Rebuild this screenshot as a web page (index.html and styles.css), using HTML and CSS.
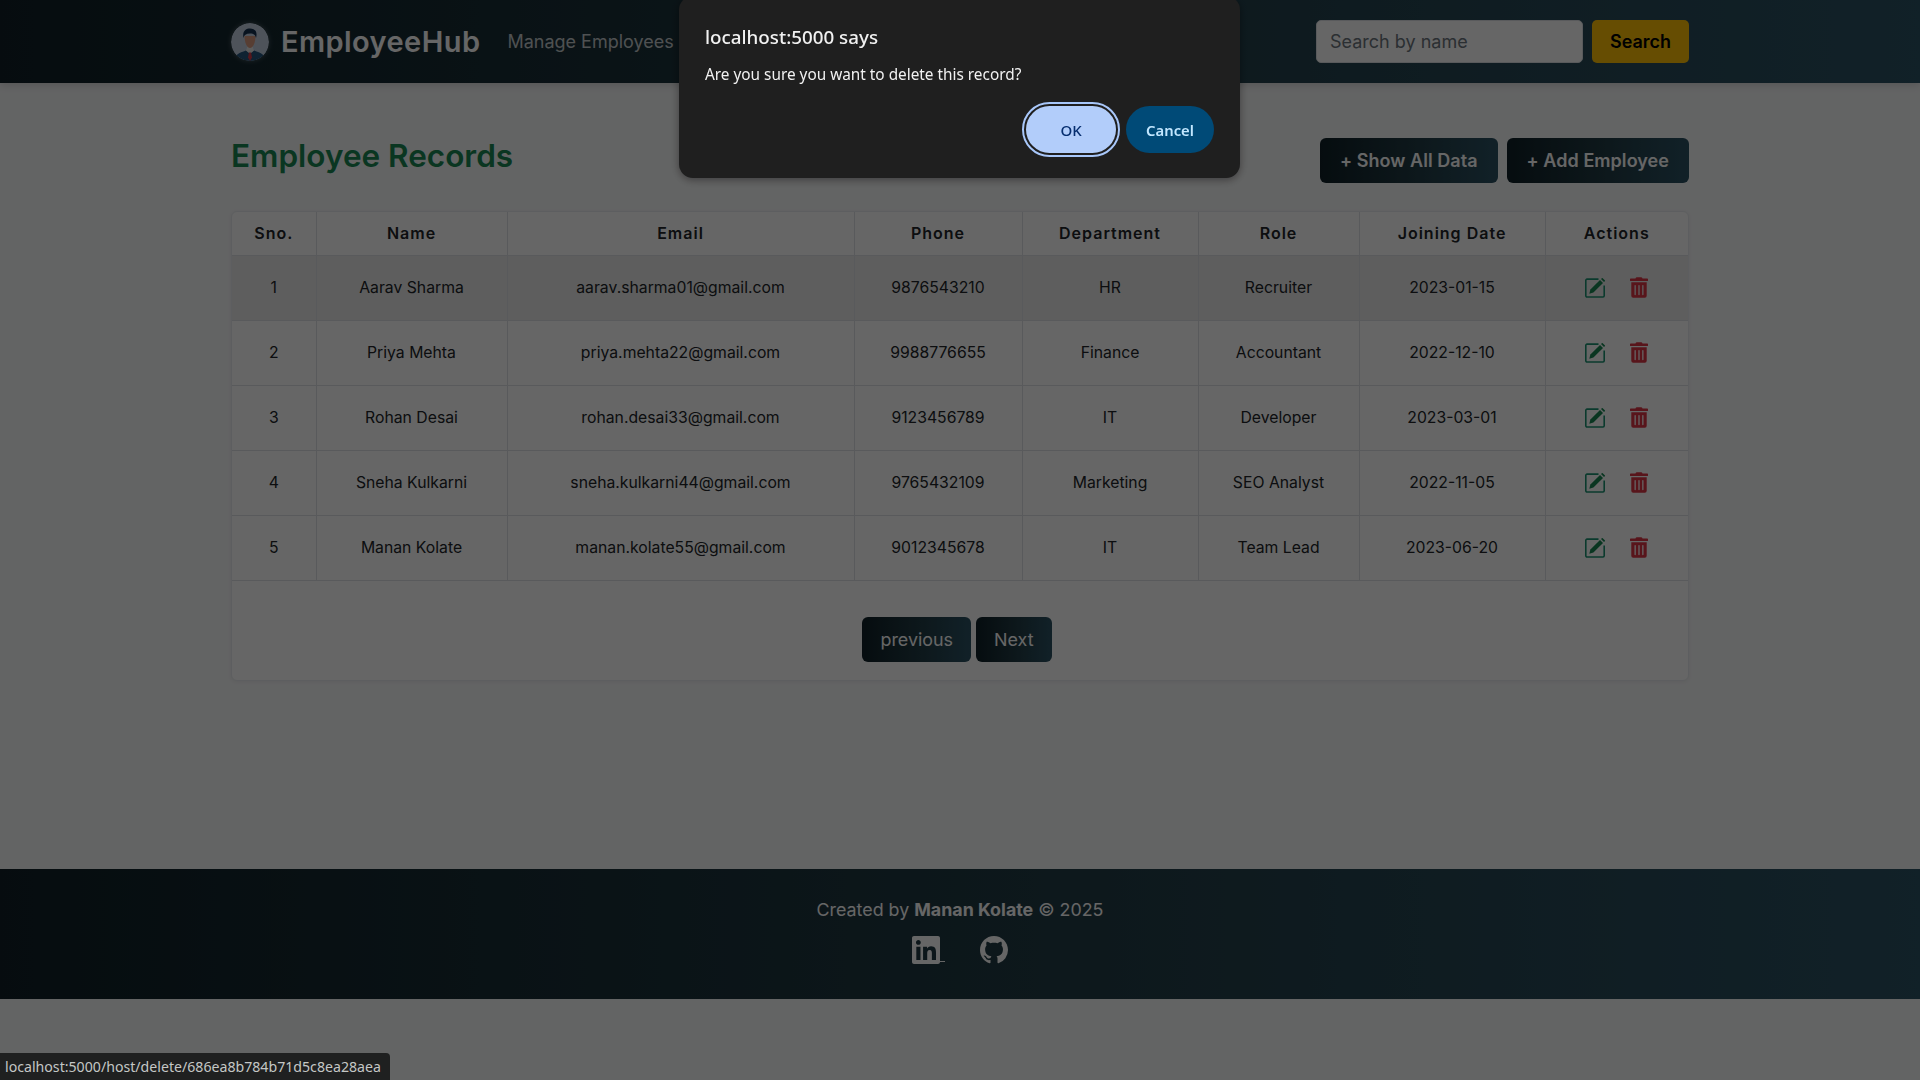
FILE: index.html
```html
<!DOCTYPE html>
<html lang="en">
<head>
<meta charset="utf-8">
<title>EmployeeHub</title>
<link rel="stylesheet" href="styles.css">
</head>
<body>
<svg class="sprite" aria-hidden="true">
  <symbol id="i-edit" viewBox="0 0 20 20">
    <path class="edit-box" d="M13.500 1.100H2A1.200 1.200 0 0 0 .8 2.300V17.800A1.200 1.200 0 0 0 2 19h16a1.200 1.200 0 0 0 1.200-1.200V7.500"/>
    <path class="edit-pen" d="M4.300 15.700l1.100-4.100L15 2l3 3-9.600 9.600z"/>
    <path class="edit-pen" d="M16 1l.8-.8a.6.6 0 0 1 .9 0l2.100 2.100a.6.6 0 0 1 0 .9l-.8.800z"/>
  </symbol>
  <symbol id="i-trash" viewBox="0 0 448 512">
    <path d="M32 464a48 48 0 0 0 48 48h288a48 48 0 0 0 48-48V128H32zm272-256a16 16 0 0 1 32 0v224a16 16 0 0 1-32 0zm-96 0a16 16 0 0 1 32 0v224a16 16 0 0 1-32 0zm-96 0a16 16 0 0 1 32 0v224a16 16 0 0 1-32 0zM432 32H312l-9.400-18.700A24 24 0 0 0 281.100 0H166.800a23.720 23.720 0 0 0-21.400 13.300L136 32H16A16 16 0 0 0 0 48v32a16 16 0 0 0 16 16h416a16 16 0 0 0 16-16V48a16 16 0 0 0-16-16z"/>
  </symbol>
</svg>

<nav class="navbar">
  <div class="nav-inner">
    <div class="nav-left">
      <svg class="avatar" viewBox="0 0 38 38" aria-hidden="true">
        <defs><clipPath id="round"><circle cx="19" cy="19" r="19"/></clipPath></defs>
        <g clip-path="url(#round)">
          <rect width="38" height="38" fill="#c2cfe2"/>
          <path d="M3 38c0-6 5-8 12-10.500l4 2 4-2c7 2.500 12 4.500 12 10.500z" fill="#26557e"/>
          <path d="M15 27.500l4 3.500 4-3.500-1.500-4h-5z" fill="#e8e8e8"/>
          <path d="M13.500 13c0 6.500 2.500 12 5.500 12s5.500-5.500 5.500-12z" fill="#d99c80"/>
          <path d="M18 29.500h2l1 5-2 3.500-2-3.500z" fill="#d83a48"/>
          <path d="M12.500 15c-1.500-7 2.500-9.500 6.500-9.500s8 2 6 9.500c-.5-3-2-4.500-6-4.500s-6 1.500-6.500 4.500z" fill="#15304f"/>
        </g>
      </svg>
      <span class="brand">EmployeeHub</span>
      <a class="nav-link">Manage Employees</a>
    </div>
    <form class="search">
      <input class="search-input" type="text" placeholder="Search by name">
      <button class="search-btn" type="button">Search</button>
    </form>
  </div>
</nav>

<main class="page">
  <div class="head-row">
    <h1 class="title">Employee Records</h1>
    <div class="head-actions">
      <a class="grad-btn strong">+ Show All Data</a>
      <a class="grad-btn strong">+ Add Employee</a>
    </div>
  </div>

  <section class="card">
    <table class="records">
      <colgroup>
        <col class="c-sno"><col class="c-name"><col class="c-email"><col class="c-phone">
        <col class="c-dept"><col class="c-role"><col class="c-date"><col class="c-act">
      </colgroup>
      <thead>
        <tr><th>Sno.</th><th>Name</th><th>Email</th><th>Phone</th><th>Department</th><th>Role</th><th>Joining Date</th><th>Actions</th></tr>
      </thead>
      <tbody>
        <tr class="hovered"><td>1</td><td>Aarav Sharma</td><td>aarav.sharma01@gmail.com</td><td>9876543210</td><td>HR</td><td>Recruiter</td><td>2023-01-15</td>
          <td><div class="acts"><svg class="ic-edit"><use href="#i-edit"/></svg><svg class="ic-trash"><use href="#i-trash"/></svg></div></td></tr>
        <tr><td>2</td><td>Priya Mehta</td><td>priya.mehta22@gmail.com</td><td>9988776655</td><td>Finance</td><td>Accountant</td><td>2022-12-10</td>
          <td><div class="acts"><svg class="ic-edit"><use href="#i-edit"/></svg><svg class="ic-trash"><use href="#i-trash"/></svg></div></td></tr>
        <tr><td>3</td><td>Rohan Desai</td><td>rohan.desai33@gmail.com</td><td>9123456789</td><td>IT</td><td>Developer</td><td>2023-03-01</td>
          <td><div class="acts"><svg class="ic-edit"><use href="#i-edit"/></svg><svg class="ic-trash"><use href="#i-trash"/></svg></div></td></tr>
        <tr><td>4</td><td>Sneha Kulkarni</td><td>sneha.kulkarni44@gmail.com</td><td>9765432109</td><td>Marketing</td><td>SEO Analyst</td><td>2022-11-05</td>
          <td><div class="acts"><svg class="ic-edit"><use href="#i-edit"/></svg><svg class="ic-trash"><use href="#i-trash"/></svg></div></td></tr>
        <tr><td>5</td><td>Manan Kolate</td><td>manan.kolate55@gmail.com</td><td>9012345678</td><td>IT</td><td>Team Lead</td><td>2023-06-20</td>
          <td><div class="acts"><svg class="ic-edit"><use href="#i-edit"/></svg><svg class="ic-trash"><use href="#i-trash"/></svg></div></td></tr>
      </tbody>
    </table>
    <div class="pager">
      <a class="grad-btn">previous</a>
      <a class="grad-btn">Next</a>
    </div>
  </section>
</main>

<footer class="footer">
  <p class="credit">Created by <strong>Manan Kolate</strong> © 2025</p>
  <div class="socials">
    <a class="social linked">
      <svg viewBox="0 32 448 448"><path d="M416 32H31.900C14.300 32 0 46.500 0 64.300v383.400C0 465.500 14.300 480 31.900 480H416c17.600 0 32-14.500 32-32.300V64.300c0-17.800-14.400-32.300-32-32.300zM135.400 416H69V202.200h66.500V416zm-33.200-243c-21.300 0-38.500-17.300-38.500-38.500S80.900 96 102.200 96c21.200 0 38.500 17.300 38.500 38.500 0 21.300-17.200 38.500-38.500 38.500zm282.100 243h-66.400V312c0-24.800-.5-56.700-34.500-56.700-34.600 0-39.900 27-39.900 54.900V416h-66.400V202.200h63.700v29.200h.9c8.900-16.800 30.600-34.500 62.900-34.500 67.200 0 79.700 44.300 79.700 101.900V416z"/></svg>
    </a>
    <a class="social">
      <svg viewBox="0 0 16 16"><path d="M8 0C3.580 0 0 3.580 0 8c0 3.540 2.290 6.530 5.470 7.590.4.070.55-.17.55-.38 0-.19-.01-.82-.01-1.490-2.010.37-2.530-.49-2.690-.94-.09-.23-.48-.94-.82-1.130-.28-.15-.68-.52-.01-.53.63-.01 1.080.58 1.230.82.72 1.210 1.870.87 2.330.66.070-.52.28-.87.51-1.070-1.780-.2-3.640-.89-3.640-3.950 0-.87.31-1.590.82-2.150-.08-.2-.36-1.020.08-2.120 0 0 .67-.21 2.200.82.64-.18 1.320-.27 2-.27.68 0 1.360.09 2 .27 1.530-1.040 2.200-.82 2.200-.82.44 1.100.16 1.920.08 2.120.51.56.82 1.270.82 2.150 0 3.070-1.870 3.750-3.650 3.950.29.25.54.73.54 1.480 0 1.070-.01 1.930-.01 2.200 0 .21.15.46.55.38A8.012 8.012 0 0 0 16 8c0-4.420-3.580-8-8-8z"/></svg>
    </a>
  </div>
</footer>

<div class="scrim"></div>

<div class="dialog" role="alertdialog">
  <div class="dlg-title">localhost:5000 says</div>
  <div class="dlg-msg">Are you sure you want to delete this record?</div>
  <div class="dlg-actions">
    <button class="dlg-btn ok" type="button">OK</button>
    <button class="dlg-btn cancel" type="button">Cancel</button>
  </div>
</div>

<div class="status">localhost:5000/host/delete/686ea8b784b71d5c8ea28aea</div>
</body>
</html>
```
FILE: styles.css
```css
* { box-sizing: border-box; }
html, body { margin: 0; padding: 0; }
body {
  min-height: 1080px;
  background: #f8f9fa;
  color: #212529;
  font-family: Inter, "Liberation Sans", sans-serif;
  font-size: 16px;
  overflow: hidden;
}
.sprite { display: none; }

/* navbar */
.navbar {
  height: 83px;
  background: linear-gradient(to right, #0f2027, #203a43, #2c5364);
  box-shadow: 0 2px 8px rgba(0, 0, 0, .15);
}
.nav-inner {
  width: 1458px;
  height: 100%;
  margin: 0 auto;
  display: flex;
  align-items: center;
  justify-content: space-between;
}
.nav-left { display: flex; align-items: center; }
.avatar {
  width: 38px;
  height: 38px;
  display: block;
  border-radius: 50%;
  box-shadow: 0 0 5px rgba(255, 255, 255, .25);
}
.brand {
  margin-left: 12px;
  color: #fff;
  font-size: 29px;
  font-weight: 600;
  letter-spacing: .42px;
}
.nav-link {
  margin-left: 27px;
  color: rgba(255, 255, 255, .75);
  font-size: 18px;
}
.search { display: flex; gap: 9px; }
.search-input {
  width: 267px;
  height: 43px;
  padding: 0 13px;
  border: 1px solid #dee2e6;
  border-radius: 5px;
  background: #fff;
  font: 18px Inter, sans-serif;
}
.search-input::placeholder { color: #6c757d; opacity: 1; }
.search-btn {
  width: 97px;
  height: 43px;
  border: 0;
  border-radius: 5px;
  background: #ffc107;
  color: #000;
  font: 600 18px Inter, sans-serif;
}

/* page */
.page { width: 1458px; margin: 0 auto; }
.head-row {
  display: flex;
  justify-content: space-between;
  padding-top: 55px;
  height: 128px;
}
.title {
  margin: -1px 0 0;
  color: #198754;
  font-size: 31.5px;
  font-weight: 600;
  line-height: 1.2;
}
.head-actions { display: flex; gap: 9px; align-items: flex-start; }
.grad-btn {
  display: inline-flex;
  align-items: center;
  justify-content: center;
  height: 45px;
  padding: 0 18px;
  border-radius: 6px;
  background: linear-gradient(to right, #0f2027, #203a43, #2c5364);
  color: #fff;
  font-size: 17.9px;
}
.grad-btn.strong { font-size: 18px; font-weight: 600; padding: 0 20px; letter-spacing: .05px; }

.card {
  border: 1px solid #e9ecef;
  border-radius: 6px;
  background: #fff;
  box-shadow: 0 1px 4px rgba(0, 0, 0, .06);
  height: 470px;
  overflow: hidden;
}
.records {
  width: 1456px;
  border-collapse: collapse;
  table-layout: fixed;
}
.c-sno { width: 84px; }
.c-name { width: 191px; }
.c-email { width: 347px; }
.c-phone { width: 168px; }
.c-dept { width: 176px; }
.c-role { width: 161px; }
.c-date { width: 186px; }
.c-act { width: 143px; }
.records th, .records td {
  border: 1px solid #dee2e6;
  text-align: center;
  vertical-align: middle;
}
.records tr > :first-child { border-left: 0; }
.records tr > :last-child { border-right: 0; }
.records thead tr > * { border-top: 0; }
.records th {
  height: 43px;
  padding: 0 0 1px;
  font-weight: 600;
  letter-spacing: 1px;
  color: #212529;
}
.records td { height: 65px; color: #212529; font-size: 15.75px; }
.hovered td { background: #ececec; }
.acts { display: flex; justify-content: center; align-items: center; gap: 25px; padding-right: 1px; }
.ic-edit { width: 20px; height: 20px; }
.edit-box { fill: none; stroke: #1c9272; stroke-width: 1.6; }
.edit-pen { fill: #198754; }
.ic-trash { width: 18px; height: 21px; margin-top: -1px; fill: #dc3545; }
.pager {
  display: flex;
  justify-content: center;
  gap: 5px;
  padding: 36px 6px 0 0;
}

/* footer */
.footer {
  margin-top: 188px;
  height: 130px;
  padding-top: 30px;
  background: linear-gradient(to right, #0f2027, #203a43, #2c5364);
  color: #fff;
  text-align: center;
}
.credit { margin: 0; font-size: 17.85px; line-height: 22px; }
.socials { display: flex; justify-content: center; gap: 40px; margin-top: 15px; }
.social { display: block; width: 28px; height: 28px; color: #fff; position: relative; }
.social svg { display: block; width: 28px; height: 28px; fill: currentColor; }
.linked::after {
  content: "";
  position: absolute;
  left: 28px;
  bottom: 2px;
  width: 5px;
  height: 1px;
  background: currentColor;
}

/* browser chrome on top of the page */
.scrim { position: fixed; inset: 0; background: rgba(0, 0, 0, .6); }
.dialog {
  position: fixed;
  top: -4px;
  left: 679px;
  width: 561px;
  height: 182px;
  padding: 30px 26px 0;
  border-radius: 14px;
  background: #1f1f1f;
  box-shadow: 0 2px 8px rgba(0, 0, 0, .4);
  font-family: "Noto Sans", sans-serif;
  color: #f1f1f1;
}
.dlg-title { font-size: 18.8px; font-weight: 500; line-height: 22px; }
.dlg-msg { margin-top: 16px; font-size: 15.35px; line-height: 20px; }
.dlg-actions { display: flex; justify-content: flex-end; gap: 10px; margin-top: 22px; }
.dlg-btn {
  height: 47px;
  border: 0;
  border-radius: 24px;
  font: 500 15px "Noto Sans", sans-serif;
}
.ok {
  width: 90px;
  background: #b2cdfa;
  color: #062e6f;
  outline: 2px solid #a8c7fa;
  outline-offset: 2px;
}
.cancel { width: 88px; background: #004a77; color: #c2e7ff; font-weight: 600; font-size: 14.8px; }
.status {
  position: fixed;
  left: 0;
  bottom: 0;
  width: 390px;
  height: 27px;
  padding: 0 5px;
  border-top-right-radius: 4px;
  background: #1f2020;
  color: #c4c7c5;
  font: 14.15px/27px "Noto Sans", sans-serif;
  white-space: nowrap;
}
```
